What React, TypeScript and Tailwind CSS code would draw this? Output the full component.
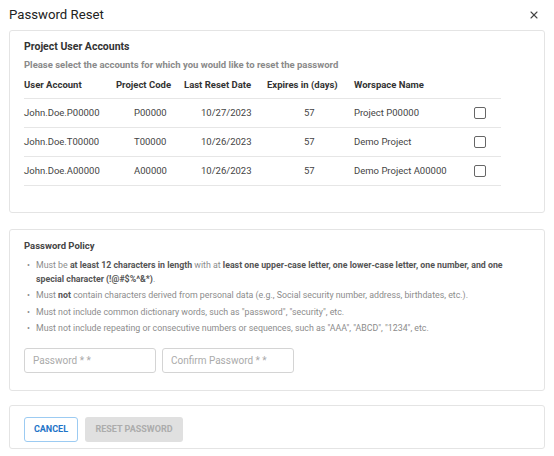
import { X } from 'lucide-react';

const rows = [
  { user: 'John.Doe.P00000', code: 'P00000', date: '10/27/2023', days: '57', ws: 'Project P00000' },
  { user: 'John.Doe.T00000', code: 'T00000', date: '10/26/2023', days: '57', ws: 'Demo Project' },
  { user: 'John.Doe.A00000', code: 'A00000', date: '10/26/2023', days: '57', ws: 'Demo Project A00000' },
];

const grid = 'grid grid-cols-[92px_68px_83px_87px_120px_1fr] items-center';

export default function App() {
  return (
    <div className="w-[554px] h-[456px] bg-white text-[#333] font-['Roboto',sans-serif] relative">
      <div className="flex items-center justify-between pl-[9px] pr-[14px] h-[30px]">
        <h1 className="text-[13.2px] text-[#222]">Password Reset</h1>
        <button className="text-[#444]">
          <X size={12} strokeWidth={2.2} />
        </button>
      </div>

      <div className="mx-[9px] border border-[#e4e4e4] rounded-[3px] h-[183px] px-[14px] pt-[9px]">
        <h2 className="text-[10.5px] font-bold text-[#333] leading-[14px]">Project User Accounts</h2>
        <p className="text-[9.5px] font-bold text-[#8a8a8a] leading-[14px] mt-[4px]">
          Please select the accounts for which you would like to reset the password
        </p>
        <div className="w-[477px]">
          <div className={`${grid} h-[27px] border-b border-[#e6e6e6] text-[9.5px] font-bold text-[#333]`}>
            <span>User Account</span>
            <span>Project Code</span>
            <span>Last Reset Date</span>
            <span>Expires in (days)</span>
            <span>Worspace Name</span>
            <span />
          </div>
          {rows.map(r => (
            <div key={r.user} className={`${grid} h-[29px] border-b border-[#e6e6e6] text-[9.5px] text-[#444]`}>
              <span>{r.user}</span>
              <span className="pl-[18px]">{r.code}</span>
              <span className="pl-[17px]">{r.date}</span>
              <span className="pl-[37px]">{r.days}</span>
              <span>{r.ws}</span>
              <span className="flex">
                <span className="w-[12px] h-[12px] border-[1.5px] border-[#666] rounded-[2px]" />
              </span>
            </div>
          ))}
        </div>
      </div>

      <div className="mx-[9px] mt-[16px] border border-[#e4e4e4] rounded-[3px] h-[162px] px-[14px] pt-[9px]">
        <h2 className="text-[9.5px] font-bold text-[#444] leading-[14px]">Password Policy</h2>
        <ul className="mt-[5px] text-[8.8px] text-[#8c8c8c] leading-[14px]">
          <li className="flex gap-[6px]">
            <span className="pl-[3px]">•</span>
            <span>
              Must be <b className="text-[#555]">at least 12 characters in length</b> with at{' '}
              <b className="text-[#555]">least one upper-case letter, one lower-case letter, one number, and one special character (!@#$%^&*)</b>.
            </span>
          </li>
          <li className="flex gap-[6px] mt-[2px]">
            <span className="pl-[3px]">•</span>
            <span>
              Must <b className="text-[#555]">not</b> contain characters derived from personal data (e.g., Social security number, address, birthdates, etc.).
            </span>
          </li>
          <li className="flex gap-[6px] mt-[3px]">
            <span className="pl-[3px]">•</span>
            <span>Must not include common dictionary words, such as "password", "security", etc.</span>
          </li>
          <li className="flex gap-[6px] mt-[2px]">
            <span className="pl-[3px]">•</span>
            <span>Must not include repeating or consecutive numbers or sequences, such as "AAA", "ABCD", "1234", etc.</span>
          </li>
        </ul>
        <div className="flex gap-[6px] mt-[13px]">
          <input
            type="password"
            placeholder="Password * *"
            className="w-[132px] h-[25px] border border-[#d4d4d4] rounded-[3px] px-[8px] text-[10px] placeholder:text-[#aaa] outline-none"
          />
          <input
            type="password"
            placeholder="Confirm Password * *"
            className="w-[132px] h-[25px] border border-[#d4d4d4] rounded-[3px] px-[8px] text-[10px] placeholder:text-[#aaa] outline-none"
          />
        </div>
      </div>

      <div className="mx-[9px] mt-[14px] border border-[#e4e4e4] rounded-[3px] h-[44px] px-[14px] pt-[11px] flex items-start gap-[7px]">
        <button className="w-[54px] h-[25px] border border-[#9ccbf2] rounded-[3px] text-[9px] font-bold text-[#1e74c8] uppercase">
          Cancel
        </button>
        <button className="w-[98px] h-[25px] bg-[#e0e0e0] rounded-[3px] text-[9px] font-bold text-[#acacac] uppercase">
          Reset Password
        </button>
      </div>
    </div>
  );
}
